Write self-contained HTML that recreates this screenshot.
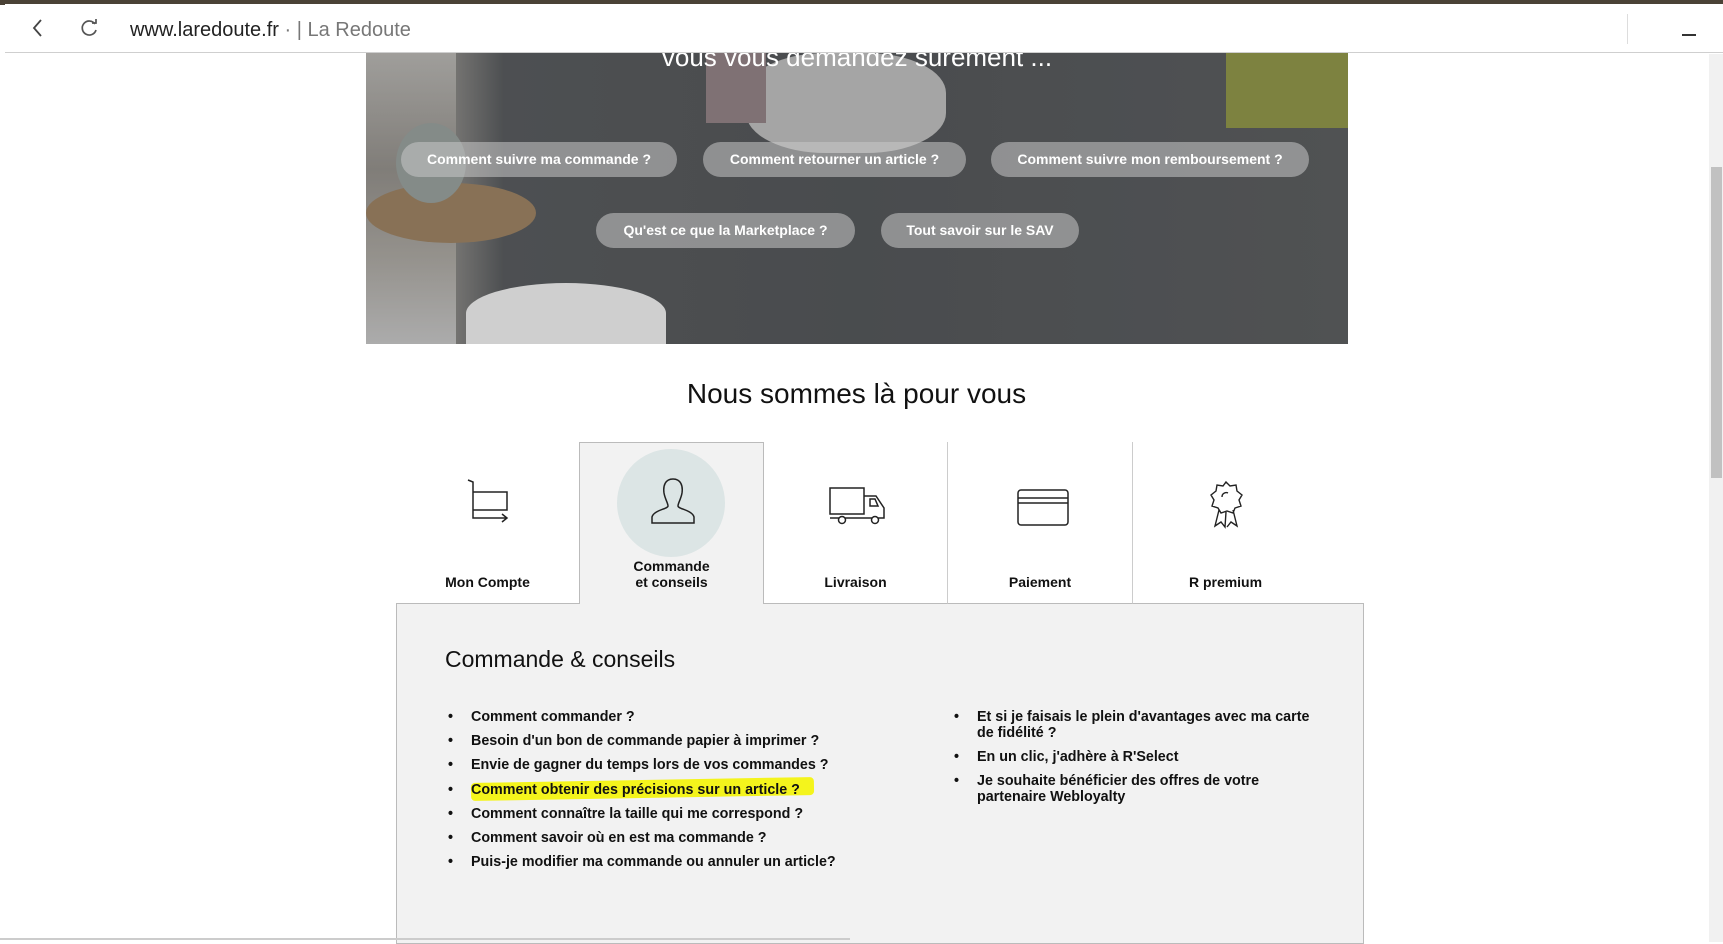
<!DOCTYPE html>
<html><head><meta charset="utf-8"><style>
*{margin:0;padding:0;box-sizing:border-box}
body{width:1723px;height:942px;overflow:hidden;background:#fff;font-family:"Liberation Sans",Arial,sans-serif;position:relative}
.abs{position:absolute}
.top{left:0;top:0;width:1723px;height:5px;background:#4a4236}
.bar{left:5px;top:4px;width:1718px;height:49px;background:#fff;border-bottom:1px solid #cfcfcf}
.url{left:125px;top:15px;font-size:20px;color:#222}
.url span{color:#777}
.hero{left:366px;top:53px;width:982px;height:291px;overflow:hidden;
background:linear-gradient(90deg,#8a8a88 0%,#9a9894 8%,#5a5d60 14%,#55585b 50%,#5a5d60 80%,#5e6062 100%)}
.btn{position:absolute;height:35px;border-radius:18px;background:rgba(200,200,200,.55);color:#fff;font-weight:bold;font-size:14px;line-height:35px;text-align:center}
.h2{left:0;width:1713px;text-align:center;top:378px;font-size:28px;color:#111}
.tab{position:absolute;top:442px;height:162px;text-align:center;font-weight:bold;font-size:14px;color:#111}
.panel{left:396px;top:604px;width:968px;height:340px;background:#f2f2f2;border:1px solid #bbb;border-top:none}
.lst{position:absolute;font-weight:bold;font-size:14.3px;color:#111;line-height:16px}
.lst div{position:relative;padding-left:23px;margin-bottom:8.2px}
.lst div:before{content:"•";position:absolute;left:0;top:0}
</style></head><body>
<div class="abs top"></div>
<div class="abs hero">
 <div class="abs" style="left:0;top:0;width:90px;height:291px;background:linear-gradient(180deg,#c8c6c2,#9e9a94 40%,#b9b5ae 70%,#d8d8d8)"></div>
 <div class="abs" style="left:0;top:130px;width:170px;height:60px;border-radius:50%;background:#a88a66"></div>
 <div class="abs" style="left:30px;top:70px;width:70px;height:80px;border-radius:50%;background:#a3aca8"></div>
 <div class="abs" style="left:380px;top:0;width:200px;height:100px;border-radius:40%;background:#cfcfcf"></div>
 <div class="abs" style="left:340px;top:0;width:60px;height:70px;background:#9c8a8e"></div>
 <div class="abs" style="left:860px;top:0;width:122px;height:75px;background:#9aa048"></div>
 <div class="abs" style="left:0;top:0;width:982px;height:291px;background:rgba(40,40,40,.25)"></div>
 <div class="abs" style="left:100px;top:230px;width:200px;height:61px;border-radius:50% 50% 0 0;background:#cfcfcf"></div>
 <div class="abs" style="left:0;top:-11px;width:982px;text-align:center;font-size:26px;color:#fff">vous vous demandez surement ...</div>
 <div class="btn" style="left:35px;top:89px;width:276px">Comment suivre ma commande ?</div>
 <div class="btn" style="left:337px;top:89px;width:263px">Comment retourner un article ?</div>
 <div class="btn" style="left:625px;top:89px;width:318px">Comment suivre mon remboursement ?</div>
 <div class="btn" style="left:230px;top:160px;width:259px">Qu'est ce que la Marketplace ?</div>
 <div class="btn" style="left:515px;top:160px;width:198px">Tout savoir sur le SAV</div>
</div>
<div class="abs bar">
 <svg class="abs" style="left:26px;top:14px" width="14" height="20"><path d="M10 2 L3 10 L10 18" stroke="#444" stroke-width="1.8" fill="none"/></svg>
 <svg class="abs" style="left:75px;top:14px" width="20" height="20"><path d="M15 6 A7 7 0 1 0 16 12" stroke="#555" stroke-width="1.7" fill="none"/><path d="M12 5 L16 5 L16 1" stroke="#555" stroke-width="1.7" fill="none"/></svg>
 <div class="abs url">www.laredoute.fr <span>· | La Redoute</span></div>
 <div class="abs" style="left:1622px;top:10px;width:1px;height:30px;background:#ddd"></div>
 <div class="abs" style="left:1677px;top:30px;width:14px;height:2px;background:#333"></div>
</div>
<div class="abs" style="left:1709px;top:54px;width:14px;height:888px;background:#f1f1f1"></div>
<div class="abs" style="left:1711px;top:167px;width:11px;height:311px;background:#c1c1c1"></div>
<div class="abs h2">Nous sommes là pour vous</div>
<div class="tab" style="left:396px;width:183px;border-bottom:1px solid #bbb">
 <svg class="abs" style="left:70px;top:36px" width="44" height="46" viewBox="0 0 44 46"><path d="M2 2 L7 4 L7 32 L41 32 L41 14 L7 14 M7 32 L7 40 L41 40 M36 36 L41 40 L36 44" stroke="#222" stroke-width="1.5" fill="none"/></svg>
 <div class="abs" style="left:0;width:100%;top:132px">Mon Compte</div></div>
<div class="tab" style="left:579px;width:185px;background:#f2f2f2;border:1px solid #bbb;border-bottom:none;height:163px">
 <div class="abs" style="left:37px;top:6px;width:108px;height:108px;border-radius:50%;background:#dce5e5"></div>
 <svg class="abs" style="left:70px;top:34px" width="46" height="48" viewBox="0 0 46 48"><path d="M23 2 C15 2 13 9 14 16 C15 22 18 26 18 29 C18 32 4 33 2 40 L2 46 L44 46 L44 40 C42 33 28 32 28 29 C28 26 31 22 32 16 C33 9 31 2 23 2Z" stroke="#222" stroke-width="1.5" fill="none"/></svg>
 <div class="abs" style="left:0;width:100%;top:115px;line-height:16px">Commande<br>et conseils</div></div>
<div class="tab" style="left:764px;width:184px;border-bottom:1px solid #bbb;border-right:1px solid #ccc">
 <svg class="abs" style="left:64px;top:44px" width="60" height="40" viewBox="0 0 60 40"><path d="M2 2 L36 2 L36 28 L2 28 Z M36 10 L48 10 L56 22 L56 32 L2 32 M42 13 L47 13 L50 20 L42 20 Z" stroke="#222" stroke-width="1.5" fill="none"/><circle cx="14" cy="34" r="3.5" stroke="#222" stroke-width="1.5" fill="#fff"/><circle cx="47" cy="34" r="3.5" stroke="#222" stroke-width="1.5" fill="#fff"/></svg>
 <div class="abs" style="left:0;width:100%;top:132px">Livraison</div></div>
<div class="tab" style="left:948px;width:185px;border-bottom:1px solid #bbb;border-right:1px solid #ccc">
 <svg class="abs" style="left:68px;top:46px" width="54" height="40" viewBox="0 0 54 40"><rect x="2" y="2" width="50" height="35" rx="3" stroke="#222" stroke-width="1.5" fill="none"/><path d="M2 10 L52 10 M2 15 L52 15" stroke="#222" stroke-width="1.5"/></svg>
 <div class="abs" style="left:0;width:100%;top:132px">Paiement</div></div>
<div class="tab" style="left:1133px;width:231px;border-bottom:1px solid #bbb">
 <svg class="abs" style="left:74px;top:38px" width="38" height="50" viewBox="0 0 38 50"><path d="M19 2 L23 6 L29 5 L30 11 L35 15 L32 20 L34 26 L28 28 L26 33 L20 31 L14 33 L11 28 L5 26 L7 20 L4 15 L9 11 L10 5 L16 6Z M12 30 L8 46 L14 42 L18 47 L19 32 M26 30 L30 46 L24 42 L20 47 M15 17 C15 13 19 12 21 13" stroke="#222" stroke-width="1.4" fill="none"/></svg>
 <div class="abs" style="left:0;width:185px;top:132px">R premium</div></div>
<div class="abs panel"></div>
<div class="abs" style="left:445px;top:646px;font-size:23px;color:#111">Commande &amp; conseils</div>
<div class="abs" style="left:471px;top:780px;width:343px;height:18px;background:#f4f41c;transform:rotate(-1deg);border-radius:4px"></div>
<div class="lst" style="left:448px;top:709px">
<div>Comment commander ?</div>
<div>Besoin d'un bon de commande papier à imprimer ?</div>
<div>Envie de gagner du temps lors de vos commandes ?</div>
<div>Comment obtenir des précisions sur un article ?</div>
<div>Comment connaître la taille qui me correspond ?</div>
<div>Comment savoir où en est ma commande ?</div>
<div>Puis-je modifier ma commande ou annuler un article?</div>
</div>
<div class="lst" style="left:954px;top:709px;width:365px">
<div>Et si je faisais le plein d'avantages avec ma carte de fidélité ?</div>
<div>En un clic, j'adhère à R'Select</div>
<div>Je souhaite bénéficier des offres de votre partenaire Webloyalty</div>
</div>
<div class="abs" style="left:0;top:938px;width:850px;height:2px;background:#ccc"></div>
</body></html>
